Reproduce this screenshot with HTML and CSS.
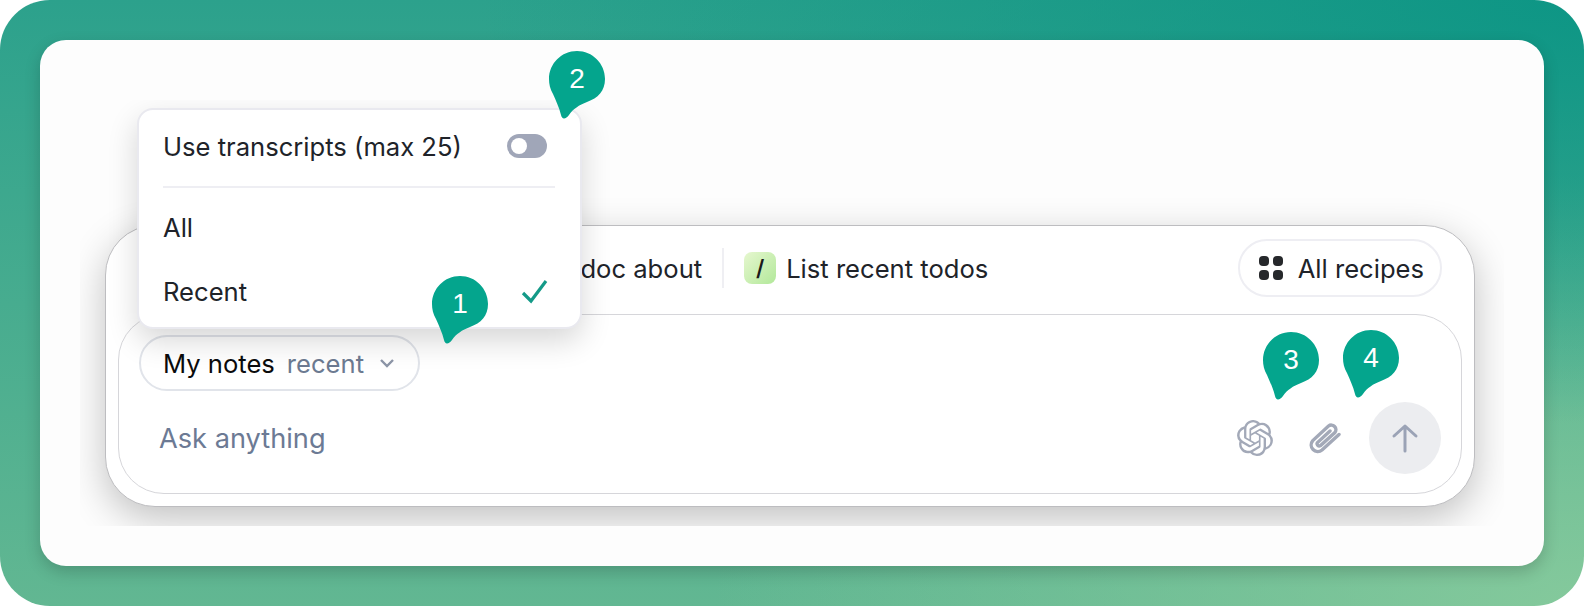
FILE: index.html
```html
<!DOCTYPE html>
<html lang="en">
<head>
  <meta charset="UTF-8">
  <title>Chat context picker</title>
  <link rel="stylesheet" href="styles.css">
</head>
<body>
  <div class="frame">
    <div class="card">
      <div class="shot">
        <div class="composer">
          <div class="recipes">
            <span class="recipe-chip">/</span>
            <span class="recipe">Write a doc about</span>
            <span class="divider"></span>
            <span class="recipe-chip">/</span>
            <span class="recipe">List recent todos</span>
            <button class="all-recipes">
              <span class="dots"><i></i><i></i><i></i><i></i></span>
              All recipes
            </button>
          </div>
          <div class="input-box">
            <div class="context-row">
              <button class="context">
                <span class="context-name">My notes</span>
                <span class="context-scope">recent</span>
                <svg class="chevron" width="16" height="10" viewBox="0 0 16 10"><path d="M2 2l6 6 6-6"/></svg>
              </button>
            </div>
            <div class="ask-row">
              <span class="placeholder">Ask anything</span>
              <div class="actions">
                <svg class="logo" width="36" height="36" viewBox="0 0 24 24"><path d="M22.2819 9.8211a5.9847 5.9847 0 0 0-.5157-4.9108 6.0462 6.0462 0 0 0-6.5098-2.9A6.0651 6.0651 0 0 0 4.9807 4.1818a5.9847 5.9847 0 0 0-3.9977 2.9 6.0462 6.0462 0 0 0 .7427 7.0966 5.98 5.98 0 0 0 .511 4.9107 6.051 6.051 0 0 0 6.5146 2.9001A5.9847 5.9847 0 0 0 13.2599 24a6.0557 6.0557 0 0 0 5.7718-4.2058 5.9894 5.9894 0 0 0 3.9977-2.9001 6.0557 6.0557 0 0 0-.7475-7.0729zm-9.022 12.6081a4.4755 4.4755 0 0 1-2.8764-1.0408l.1419-.0804 4.7783-2.7582a.7948.7948 0 0 0 .3927-.6813v-6.7369l2.02 1.1686a.071.071 0 0 1 .038.052v5.5826a4.504 4.504 0 0 1-4.4945 4.4944zm-9.6607-4.1254a4.4708 4.4708 0 0 1-.5346-3.0137l.142.0852 4.783 2.7582a.7712.7712 0 0 0 .7806 0l5.8428-3.3685v2.3324a.0804.0804 0 0 1-.0332.0615L9.74 19.9502a4.4992 4.4992 0 0 1-6.1408-1.6464zM2.3408 7.8956a4.485 4.485 0 0 1 2.3655-1.9728V11.6a.7664.7664 0 0 0 .3879.6765l5.8144 3.3543-2.0201 1.1685a.0757.0757 0 0 1-.071 0l-4.8303-2.7865A4.504 4.504 0 0 1 2.3408 7.872zm16.5963 3.8558L13.1038 8.364 15.1192 7.2a.0757.0757 0 0 1 .071 0l4.8303 2.7913a4.4944 4.4944 0 0 1-.6765 8.1042v-5.6772a.79.79 0 0 0-.407-.667zm2.0107-3.0231l-.142-.0852-4.7735-2.7818a.7759.7759 0 0 0-.7854 0L9.409 9.2297V6.8974a.0662.0662 0 0 1 .0284-.0615l4.8303-2.7866a4.4992 4.4992 0 0 1 6.6802 4.66zM8.3065 12.863l-2.02-1.1638a.0804.0804 0 0 1-.038-.0567V6.0742a4.4992 4.4992 0 0 1 7.3757-3.4537l-.142.0805L8.704 5.459a.7948.7948 0 0 0-.3927.6813zm1.0976-2.3654l2.602-1.4998 2.6069 1.4998v2.9994l-2.5974 1.4997-2.6067-1.4997Z"/></svg>
                <svg class="clip" width="32" height="32" viewBox="0 0 32 32"><path d="M30 12.5L13 28a6.6 6.6 0 0 1-9.2-9.4L19.5 4a4.6 4.6 0 0 1 6.4 6.5L11.5 23.6a2.2 2.2 0 0 1-3-3.1L21 9"/></svg>
                <button class="send">
                  <svg width="28" height="30" viewBox="0 0 28 30"><path d="M14 28V3M3 13L14 3l11 10"/></svg>
                </button>
              </div>
            </div>
          </div>
        </div>

        <div class="popover">
          <div class="pop-row">
            <span>Use transcripts (max 25)</span>
            <span class="toggle"><i></i></span>
          </div>
          <div class="pop-sep"></div>
          <div class="pop-row">All</div>
          <div class="pop-row">
            <span>Recent</span>
            <svg class="check" width="27" height="25" viewBox="0 0 27 25"><path d="M2 14l8 8L25 2"/></svg>
          </div>
        </div>
      </div>

      <div class="pin pin-1"><svg width="56" height="68" viewBox="0 0 56 68"><path d="M28 0C43.5 0 56 12.5 56 28 56 40 49 47 38 51 30 54 24 58 20 64 17 68 13 69 12 64 10 56 7 50 4 43 1 38 0 33 0 28 0 12.5 12.5 0 28 0Z"/></svg><span>1</span></div>
      <div class="pin pin-2"><svg width="56" height="68" viewBox="0 0 56 68"><path d="M28 0C43.5 0 56 12.5 56 28 56 40 49 47 38 51 30 54 24 58 20 64 17 68 13 69 12 64 10 56 7 50 4 43 1 38 0 33 0 28 0 12.5 12.5 0 28 0Z"/></svg><span>2</span></div>
      <div class="pin pin-3"><svg width="56" height="68" viewBox="0 0 56 68"><path d="M28 0C43.5 0 56 12.5 56 28 56 40 49 47 38 51 30 54 24 58 20 64 17 68 13 69 12 64 10 56 7 50 4 43 1 38 0 33 0 28 0 12.5 12.5 0 28 0Z"/></svg><span>3</span></div>
      <div class="pin pin-4"><svg width="56" height="68" viewBox="0 0 56 68"><path d="M28 0C43.5 0 56 12.5 56 28 56 40 49 47 38 51 30 54 24 58 20 64 17 68 13 69 12 64 10 56 7 50 4 43 1 38 0 33 0 28 0 12.5 12.5 0 28 0Z"/></svg><span>4</span></div>
    </div>
  </div>
</body>
</html>
```

FILE: styles.css
```css
* {
  box-sizing: border-box;
}
html, body {
  height: 100%;
}
body {
  margin: 0;
  background: #fff;
  font-family: Inter, 'Liberation Sans', sans-serif;
  color: #202329;
  overflow: hidden;
}
button {
  font: inherit;
  color: inherit;
  background: none;
  cursor: pointer;
}
.frame {
  height: 606px;
  padding: 40px;
  border-radius: 50px;
  display: flex;
  background:
    radial-gradient(ellipse 70% 70% at 100% 0, rgba(8,148,132,0.85), rgba(8,148,132,0)),
    radial-gradient(ellipse 55% 70% at 100% 100%, rgba(136,203,157,0.9), rgba(136,203,157,0)),
    linear-gradient(180deg, #2ca18c 0%, #62b792 100%);
}
.card {
  position: relative;
  flex: 1;
  padding: 60px 40px 40px 40px;
  background: #fdfdfd;
  border-radius: 26px;
  box-shadow: 0 6px 16px rgba(0,0,0,0.18);
}
.shot {
  position: relative;
  height: 426px;
  padding: 125px 29px 19px 25px;
  overflow: hidden;
  background: #fdfdfd;
}
.composer {
  height: 282px;
  background: #fff;
  border: 1px solid #bdbdc0;
  border-radius: 50px;
  box-shadow: 0 12px 38px rgba(0,0,0,0.24);
  display: flex;
  flex-direction: column;
}
.recipes {
  height: 84px;
  margin-bottom: 4px;
  padding: 0 32px 0 340px;
  display: flex;
  align-items: center;
  gap: 20px;
  font-size: 25.6px;
}
.recipe {
  margin-left: -10px;
  white-space: nowrap;
}
.recipe-chip {
  width: 32px;
  height: 32px;
  border-radius: 8px;
  background: linear-gradient(135deg, #e6f7cf, #b2e89a);
  color: #1a1a1a;
  font-size: 22px;
  font-weight: 600;
  line-height: 32px;
  text-align: center;
  flex: none;
}
.divider {
  width: 2px;
  height: 40px;
  background: #efeff3;
  flex: none;
}
.all-recipes {
  margin-left: auto;
  height: 58px;
  padding: 0 16px 0 19px;
  border: 2px solid #eeeef3;
  border-radius: 29px;
  display: flex;
  align-items: center;
  gap: 15px;
}
.dots {
  width: 24px;
  height: 24px;
  display: grid;
  grid-template-columns: 10px 10px;
  gap: 4px;
}
.dots i {
  background: #26282b;
  border-radius: 4px;
}
.input-box {
  flex: 1;
  margin: 0 12px 12px 12px;
  padding: 20px 20px 18px 20px;
  border: 1px solid #d6d6da;
  border-radius: 46px;
  display: flex;
  flex-direction: column;
  gap: 11px;
}
.context-row {
  display: flex;
}
.context {
  height: 56px;
  padding: 0 23px 0 22px;
  border: 2px solid #e1e4ea;
  border-radius: 28px;
  display: flex;
  align-items: center;
  font-size: 25.6px;
}
.context-name {
  color: #0b0b0c;
}
.context-scope {
  margin-left: 12px;
  color: #6c7a91;
}
.chevron {
  margin-left: 15px;
  fill: none;
  stroke: #8d96a8;
  stroke-width: 2.4;
}
.ask-row {
  display: flex;
  align-items: center;
  justify-content: space-between;
}
.placeholder {
  margin-left: 20px;
  font-size: 27.2px;
  color: #6c7a94;
}
.actions {
  display: flex;
  align-items: center;
}
.logo {
  fill: #a3a9b8;
}
.clip {
  margin-left: 36px;
  fill: none;
  stroke: #a3a9b8;
  stroke-width: 3.4;
  stroke-linecap: round;
}
.send {
  width: 72px;
  height: 72px;
  margin-left: 28px;
  padding: 0;
  border: 0;
  border-radius: 50%;
  background: #ecedf0;
  display: flex;
  align-items: center;
  justify-content: center;
}
.send svg {
  fill: none;
  stroke: #9ba3b6;
  stroke-width: 3;
  stroke-linecap: round;
  stroke-linejoin: round;
}
.popover {
  position: absolute;
  left: 57px;
  top: 8px;
  width: 445px;
  height: 221px;
  padding: 4px 33px 0 24px;
  background: #fff;
  border: 2px solid #e9e9ef;
  border-radius: 16px;
  box-shadow: 0 12px 30px rgba(0,0,0,0.16);
  font-size: 25.6px;
}
.pop-row {
  height: 64px;
  display: flex;
  align-items: center;
  justify-content: space-between;
}
.pop-sep {
  height: 2px;
  margin: 8px -8px 7px 0;
  background: #eeeef3;
}
.toggle {
  width: 40px;
  height: 24px;
  padding: 4px;
  background: #a0a6b8;
  border-radius: 12px;
  display: flex;
}
.toggle i {
  width: 16px;
  height: 16px;
  background: #fff;
  border-radius: 50%;
}
.check {
  margin-right: -1px;
  fill: none;
  stroke: #149a88;
  stroke-width: 3.2;
}
.pin {
  position: absolute;
  width: 56px;
  height: 68px;
  fill: #04a58d;
}
.pin svg {
  display: block;
}
.pin span {
  position: absolute;
  left: 0;
  top: 0;
  width: 56px;
  height: 56px;
  font-family: 'Liberation Sans', sans-serif;
  font-size: 28px;
  line-height: 56px;
  text-align: center;
  color: #fff;
}
.pin-1 { left: 392px; top: 236px; }
.pin-2 { left: 509px; top: 11px; }
.pin-3 { left: 1223px; top: 292px; }
.pin-4 { left: 1303px; top: 290px; }
```
